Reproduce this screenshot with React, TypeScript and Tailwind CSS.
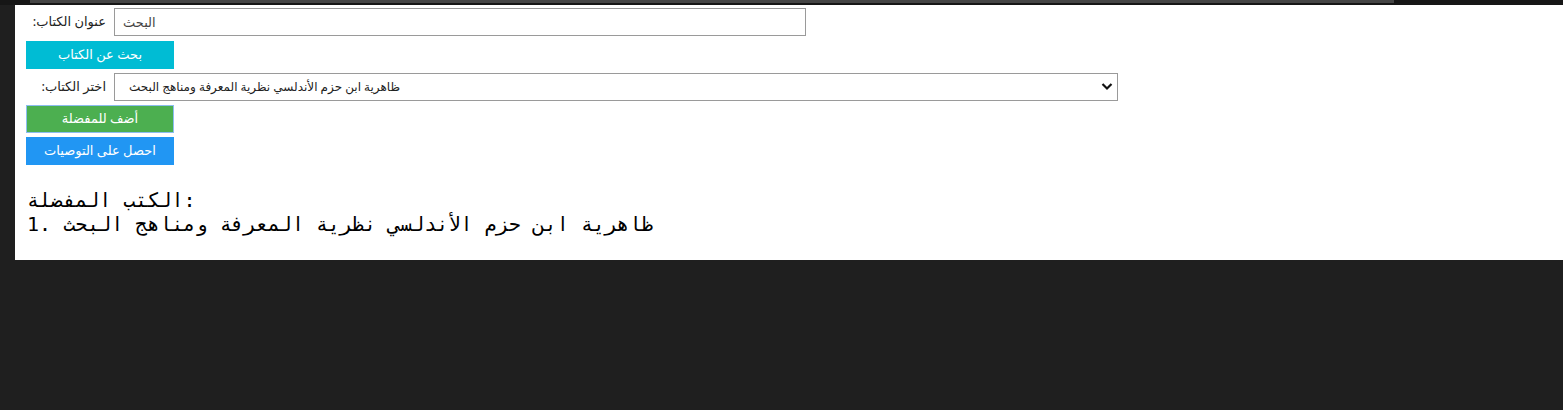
import React from "react";

export default function App() {
  const ui = { fontFamily: '"Noto Sans", "DejaVu Sans", sans-serif' };
  const mono = { fontFamily: '"DejaVu Sans Mono", "Liberation Mono", monospace' };
  return (
    <div className="min-h-[410px] w-full bg-[#1f1f1f]" style={ui}>
      <div className="h-[5px] w-full bg-[#161616]">
        <div className="ml-[30px] h-[3px] w-[1364px] bg-[#454545]" />
      </div>
      <div className="ml-[15px] h-[255px] bg-white pl-[11px] pt-[3px]">
        <div className="flex h-[28px] items-center">
          <label dir="rtl" className="w-[80px] text-right text-[13px] text-[#222]">
            عنوان الكتاب:
          </label>
          <input
            className="ml-[8px] h-[28px] w-[692px] border border-[#9a9a9a] px-[8px] text-[13px] text-[#444] outline-none"
            defaultValue="البحث"
            style={ui}
          />
        </div>
        <button
          className="mt-[5px] block h-[28px] w-[148px] bg-[#00bcd4] text-center text-[13px] text-white"
          style={ui}
        >
          بحث عن الكتاب
        </button>
        <div className="mt-[4px] flex h-[28px] items-center">
          <label dir="rtl" className="w-[80px] text-right text-[13px] text-[#222]">
            اختر الكتاب:
          </label>
          <div className="relative ml-[8px] h-[28px] w-[1004px]">
            <select
              className="h-[28px] w-full appearance-none border border-[#9a9a9a] bg-white pl-[14px] pr-[8px] text-[12px] text-[#222] outline-none"
              style={ui}
              defaultValue="a"
            >
              <option value="a">ظاهرية ابن حزم الأندلسي نظرية المعرفة ومناهج البحث</option>
            </select>
            <svg
              className="pointer-events-none absolute right-[5px] top-[9px]"
              width="12"
              height="9"
              viewBox="0 0 12 9"
            >
              <path d="M1.5 2 L6 6.5 L10.5 2" fill="none" stroke="#111" strokeWidth="2.2" />
            </svg>
          </div>
        </div>
        <button
          className="mt-[4px] block h-[28px] w-[148px] border border-[#8cbdf0] bg-[#4caf50] text-center text-[13px] text-white"
          style={ui}
        >
          أضف للمفضلة
        </button>
        <button
          className="mt-[4px] block h-[28px] w-[148px] bg-[#2196f3] text-center text-[13px] text-white"
          style={ui}
        >
          احصل على التوصيات
        </button>
        <div className="mt-[23px] text-[20px] leading-[24px] text-black" style={mono}>
          <div className="pl-[1px]">الكتب المفضلة:</div>
          <div className="pl-[1px]">1. ظاهرية ابن حزم الأندلسي نظرية المعرفة ومناهج البحث</div>
        </div>
      </div>
    </div>
  );
}
